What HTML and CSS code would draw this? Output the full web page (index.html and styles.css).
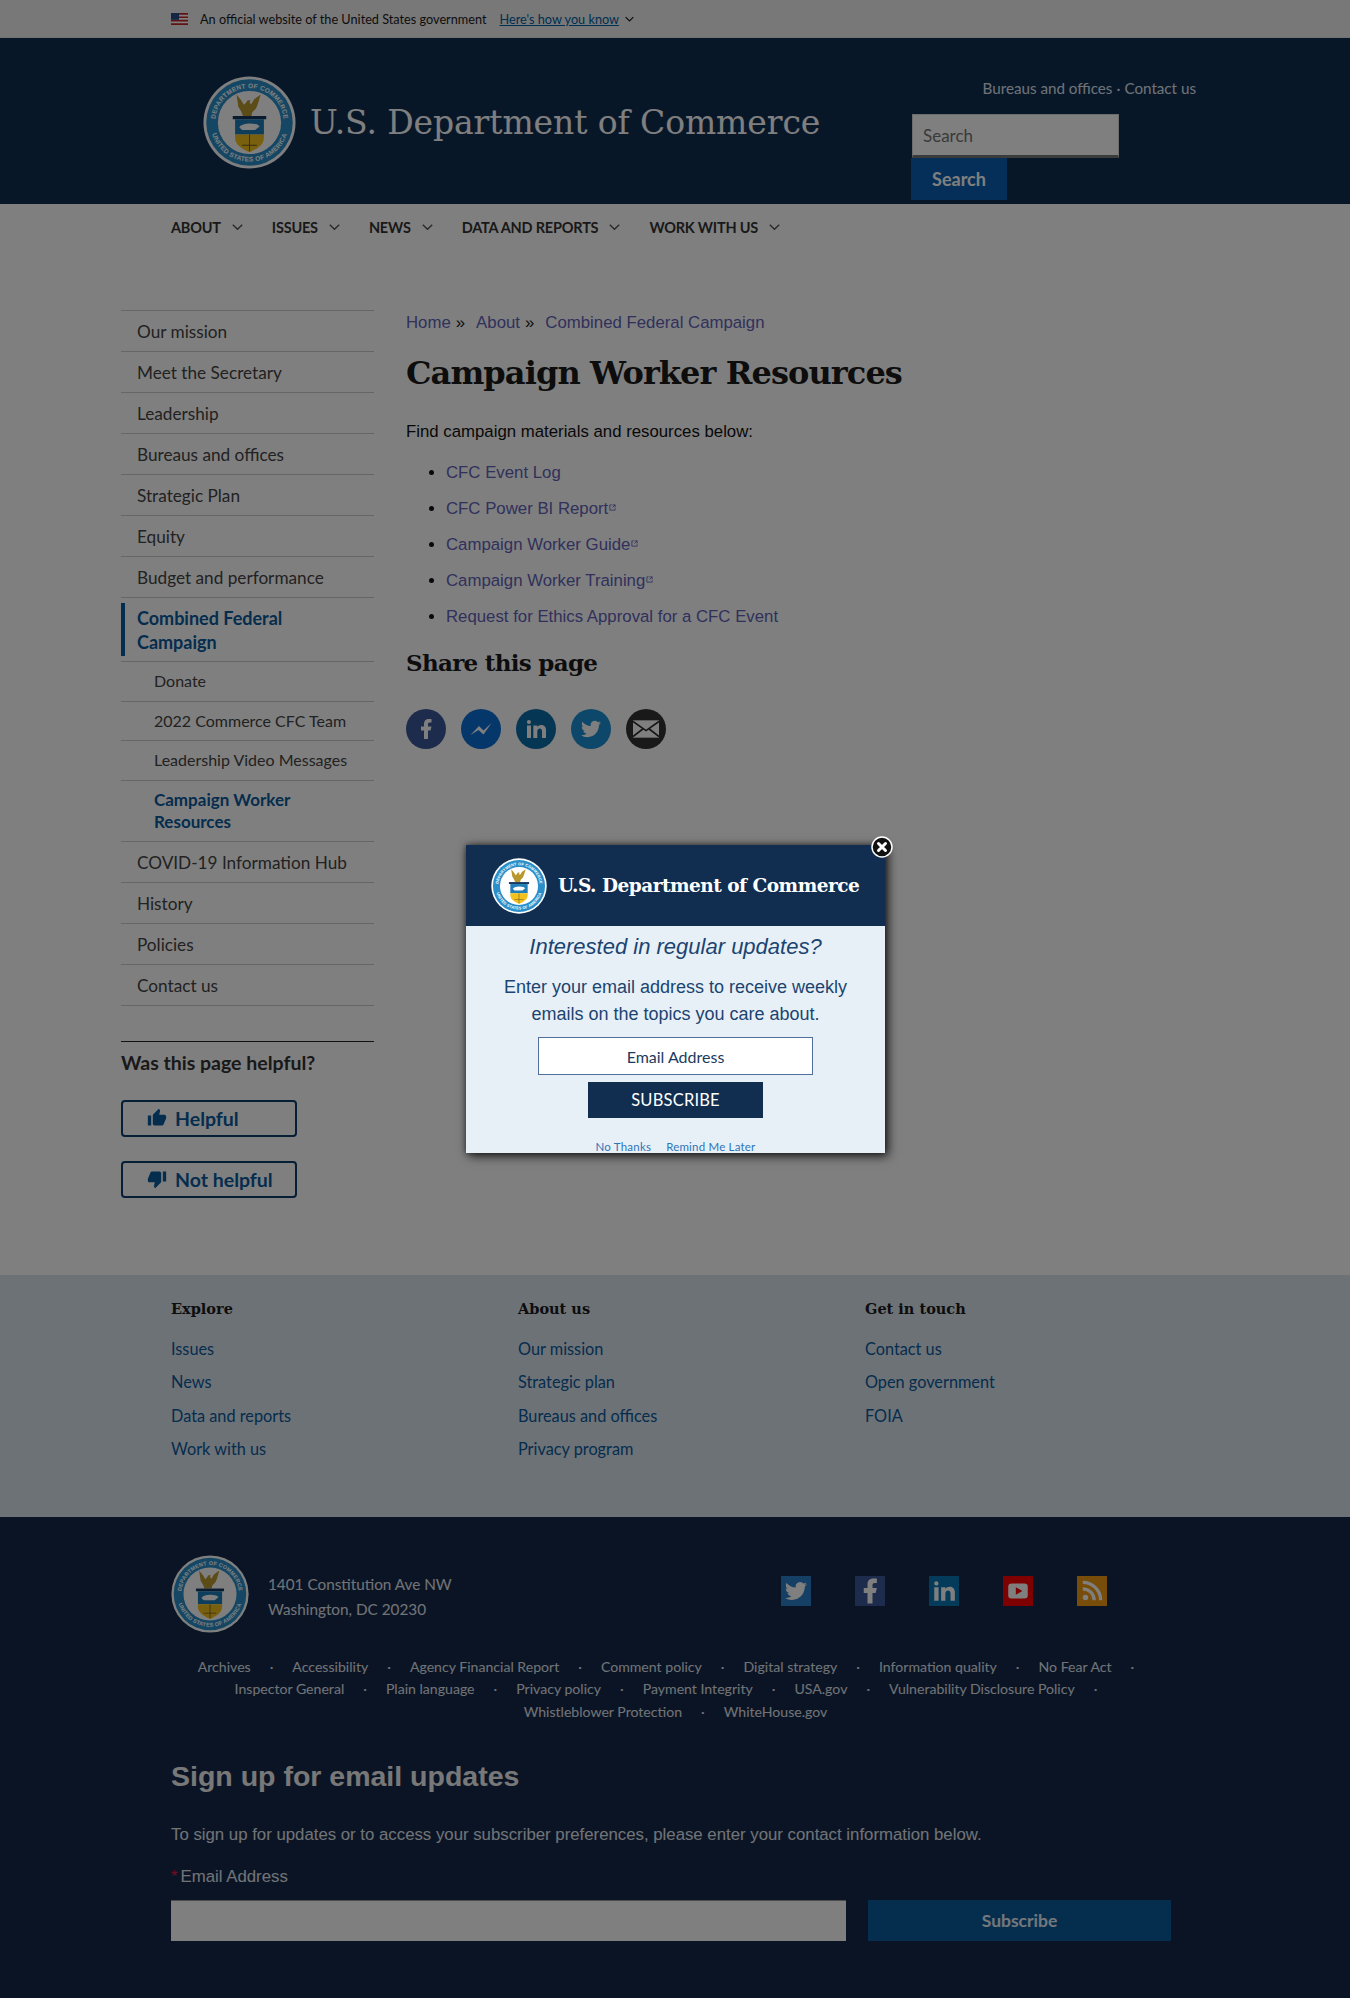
FILE: index.html
```html
<!DOCTYPE html>
<html lang="en">
<head>
<meta charset="utf-8">
<title>Campaign Worker Resources | U.S. Department of Commerce</title>
<link rel="stylesheet" href="styles.css">
</head>
<body>
<svg class="defs" width="0" height="0" aria-hidden="true">
  <defs>
    <symbol id="seal" viewBox="0 0 100 100">
      <circle cx="50" cy="50" r="49.5" fill="#fff"/>
      <circle cx="50" cy="50" r="46.5" fill="#2a8fc9"/>
      <circle cx="50" cy="50" r="34" fill="#fff"/>
      <path id="ringTop" d="M13 50a37 37 0 0 1 74 0" fill="none"/>
      <path id="ringBottom" d="M8 50a42 42 0 0 0 84 0" fill="none"/>
      <text class="seal-text"><textPath href="#ringTop" startOffset="50%" text-anchor="middle">DEPARTMENT OF COMMERCE</textPath></text>
      <text class="seal-text"><textPath href="#ringBottom" startOffset="50%" text-anchor="middle">UNITED STATES OF AMERICA</textPath></text>
      <path d="M36 20l5 6 3 5 2-2 2-3h3l-1 3 2 1 3-5 7-5-3 10-2 5-4 4-1 4h-9l-2-5-3-5z" fill="#b8982e"/>
      <rect x="32" y="43" width="36" height="3.500" fill="#16395f"/>
      <path d="M34.500 46.500h31V63h-31z" fill="#1f7db8"/>
      <path d="M39 55c3-4 11-5 19-3l3 2-5 4H42z" fill="#fff"/>
      <path d="M34.500 63h31v3c0 8-7 12-15.500 16-8.500-4-15.500-8-15.500-16z" fill="#f3c11c"/>
      <path d="M49.500 63h1v18h-1zM42 74h16v1H42z" fill="#6a5a20"/>
    </symbol>
    <symbol id="i-tw" viewBox="0 0 24 24"><path d="M23.950 4.570a10 10 0 0 1-2.830.78 4.960 4.960 0 0 0 2.160-2.720c-.95.550-2 .96-3.130 1.190a4.920 4.920 0 0 0-8.380 4.480C7.690 8.100 4.070 6.130 1.640 3.160a4.820 4.820 0 0 0-.66 2.470c0 1.710.87 3.210 2.190 4.100a4.900 4.900 0 0 1-2.230-.62v.06a4.920 4.920 0 0 0 3.950 4.830 5 5 0 0 1-2.210.08 4.940 4.940 0 0 0 4.600 3.420A9.870 9.870 0 0 1 0 19.540a14 14 0 0 0 7.560 2.210c9.050 0 14-7.500 14-13.980 0-.21 0-.42-.02-.63a9.940 9.940 0 0 0 2.460-2.550z"/></symbol>
    <symbol id="i-fb" viewBox="0 0 24 24"><path d="M14 13.500h2.500l1-4H14v-2c0-1.030 0-2 2-2h1.500V2.140c-.326-.043-1.557-.14-2.857-.14C11.928 2 10 3.657 10 6.700v2.800H7v4h3V22h4v-8.500z"/></symbol>
    <symbol id="i-in" viewBox="0 0 24 24"><path d="M6.940 5a2 2 0 1 1-4-.002 2 2 0 0 1 4 .002zM7 8.480H3V21h4V8.480zm6.320 0H9.340V21h3.940v-6.570c0-3.660 4.770-4 4.770 0V21H22v-7.930c0-6.170-7.060-5.940-8.720-2.910l.04-1.680z"/></symbol>
    <symbol id="i-up" viewBox="0 0 24 24"><path d="M1 21h4V9H1v12zm22-11c0-1.100-.9-2-2-2h-6.310l.95-4.570.03-.32c0-.41-.17-.79-.44-1.060L14.170 1 7.590 7.590C7.220 7.950 7 8.450 7 9v10c0 1.100.9 2 2 2h9c.83 0 1.540-.5 1.840-1.220l3.020-7.050c.09-.23.14-.47.14-.73v-2z"/></symbol>
    <symbol id="i-down" viewBox="0 0 24 24"><path d="M15 3H6c-.83 0-1.540.5-1.840 1.220l-3.020 7.050c-.09.23-.14.47-.14.73v2c0 1.100.9 2 2 2h6.310l-.95 4.570-.03.32c0 .41.17.79.44 1.060L9.830 23l6.590-6.590c.36-.36.58-.86.58-1.410V5c0-1.100-.9-2-2-2zm4 0v12h4V3h-4z"/></symbol>
    <symbol id="i-ext" viewBox="0 0 8 8"><path d="M3 1H1v6h6V5M4 1h3v3M7 1L4 4" fill="none" stroke="currentColor" stroke-width="1"/></symbol>
    <symbol id="i-chev" viewBox="0 0 14 9"><path d="M1 1.500l6 6 6-6" fill="none" stroke="currentColor" stroke-width="1.800"/></symbol>
  </defs>
</svg>

<div class="page">
  <div class="gov-banner">
    <svg class="flag" viewBox="0 0 17 12" width="17" height="12" aria-hidden="true">
      <rect width="17" height="12" fill="#fff"/>
      <path d="M0 0h17v1.700H0zM0 3.400h17v1.700H0zM0 6.800h17v1.700H0zM0 10.200h17V12H0z" fill="#c0262b"/>
      <rect width="8" height="6.800" fill="#2a4a8a"/>
    </svg>
    <span class="gov-text">An official website of the United States government</span>
    <a class="gov-link" href="#">Here's how you know</a>
    <svg class="gov-chev" width="9" height="6"><use href="#i-chev"/></svg>
  </div>

  <header class="site-header">
    <a class="brand" href="#">
      <svg class="brand-seal"><use href="#seal"/></svg>
      <span class="brand-name">U.S. Department of Commerce</span>
    </a>
    <div class="header-tools">
      <div class="top-links"><a href="#">Bureaus and offices</a><span class="sep">·</span><a href="#">Contact us</a></div>
      <div class="search-box"><input class="search-input" type="text" placeholder="Search"></div>
      <button class="search-btn" type="button">Search</button>
    </div>
  </header>

  <nav class="main-nav">
    <a href="#">About<svg class="nav-chev"><use href="#i-chev"/></svg></a>
    <a href="#">Issues<svg class="nav-chev"><use href="#i-chev"/></svg></a>
    <a href="#">News<svg class="nav-chev"><use href="#i-chev"/></svg></a>
    <a href="#">Data and reports<svg class="nav-chev"><use href="#i-chev"/></svg></a>
    <a href="#">Work with us<svg class="nav-chev"><use href="#i-chev"/></svg></a>
  </nav>

  <div class="content">
    <aside class="sidebar">
      <ul class="side-menu">
        <li><a href="#">Our mission</a></li>
        <li><a href="#">Meet the Secretary</a></li>
        <li><a href="#">Leadership</a></li>
        <li><a href="#">Bureaus and offices</a></li>
        <li><a href="#">Strategic Plan</a></li>
        <li><a href="#">Equity</a></li>
        <li><a href="#">Budget and performance</a></li>
        <li class="active"><a href="#">Combined Federal Campaign</a></li>
        <li class="sub"><a href="#">Donate</a></li>
        <li class="sub"><a href="#">2022 Commerce CFC Team</a></li>
        <li class="sub"><a href="#">Leadership Video Messages</a></li>
        <li class="sub current"><a href="#">Campaign Worker Resources</a></li>
        <li><a href="#">COVID-19 Information Hub</a></li>
        <li><a href="#">History</a></li>
        <li><a href="#">Policies</a></li>
        <li><a href="#">Contact us</a></li>
      </ul>
      <div class="helpful">
        <h2 class="helpful-title">Was this page helpful?</h2>
        <button class="helpful-btn" type="button"><svg class="thumb"><use href="#i-up"/></svg>Helpful</button>
        <button class="helpful-btn" type="button"><svg class="thumb"><use href="#i-down"/></svg>Not helpful</button>
      </div>
    </aside>

    <main class="main">
      <div class="crumbs"><a href="#">Home</a><span class="crumb-sep">»</span><a href="#">About</a><span class="crumb-sep">»</span><a href="#">Combined Federal Campaign</a></div>
      <h1 class="page-title">Campaign Worker Resources</h1>
      <p class="lead">Find campaign materials and resources below:</p>
      <ul class="res-list">
        <li><a href="#">CFC Event Log</a></li>
        <li><a href="#">CFC Power BI Report<svg class="ext"><use href="#i-ext"/></svg></a></li>
        <li><a href="#">Campaign Worker Guide<svg class="ext"><use href="#i-ext"/></svg></a></li>
        <li><a href="#">Campaign Worker Training<svg class="ext"><use href="#i-ext"/></svg></a></li>
        <li><a href="#">Request for Ethics Approval for a CFC Event</a></li>
      </ul>
      <h2 class="share-title">Share this page</h2>
      <div class="share">
        <a class="share-btn fb" href="#"><svg><use href="#i-fb"/></svg></a>
        <a class="share-btn ms" href="#"><svg viewBox="0 0 24 24"><path d="M1.500 18l8.500-9 4.500 4.500L22.500 6l-8 11.500-5-4.500z"/></svg></a>
        <a class="share-btn li" href="#"><svg><use href="#i-in"/></svg></a>
        <a class="share-btn tw" href="#"><svg><use href="#i-tw"/></svg></a>
        <a class="share-btn em" href="#"><svg viewBox="0 0 24 24"><path d="M0 4h24v16H0z"/><path d="M0 5l12 8.500L24 5M0 19l9-7M24 19l-9-7" fill="none" stroke="#2a2a2a" stroke-width="1.500"/></svg></a>
      </div>
    </main>
  </div>

  <section class="foot-links">
    <div class="foot-col">
      <h3>Explore</h3>
      <a href="#">Issues</a><a href="#">News</a><a href="#">Data and reports</a><a href="#">Work with us</a>
    </div>
    <div class="foot-col">
      <h3>About us</h3>
      <a href="#">Our mission</a><a href="#">Strategic plan</a><a href="#">Bureaus and offices</a><a href="#">Privacy program</a>
    </div>
    <div class="foot-col">
      <h3>Get in touch</h3>
      <a href="#">Contact us</a><a href="#">Open government</a><a href="#">FOIA</a>
    </div>
  </section>

  <footer class="site-footer">
    <div class="foot-top">
      <svg class="foot-seal"><use href="#seal"/></svg>
      <address class="foot-address">1401 Constitution Ave NW<br>Washington, DC 20230</address>
      <div class="socials">
        <a class="soc s-tw" href="#"><svg><use href="#i-tw"/></svg></a>
        <a class="soc s-fb" href="#"><svg><use href="#i-fb"/></svg></a>
        <a class="soc s-li" href="#"><svg><use href="#i-in"/></svg></a>
        <a class="soc s-yt" href="#"><svg viewBox="0 0 24 24"><rect x="3" y="5" width="18" height="14" rx="3"/><path class="yt-play" d="M10 8.500l6 3.500-6 3.500z"/></svg></a>
        <a class="soc s-rs" href="#"><svg viewBox="0 0 24 24"><circle cx="6" cy="18" r="2.500"/><path d="M3.500 10a10.500 10.500 0 0 1 10.500 10.500M3.500 4a16.500 16.500 0 0 1 16.500 16.500" fill="none" stroke="currentColor" stroke-width="3"/></svg></a>
      </div>
    </div>
    <ul class="legal">
      <li><a href="#">Archives</a></li><li><a href="#">Accessibility</a></li><li><a href="#">Agency Financial Report</a></li><li><a href="#">Comment policy</a></li><li><a href="#">Digital strategy</a></li><li><a href="#">Information quality</a></li><li><a href="#">No Fear Act</a></li>
    </ul>
    <ul class="legal">
      <li><a href="#">Inspector General</a></li><li><a href="#">Plain language</a></li><li><a href="#">Privacy policy</a></li><li><a href="#">Payment Integrity</a></li><li><a href="#">USA.gov</a></li><li><a href="#">Vulnerability Disclosure Policy</a></li>
    </ul>
    <ul class="legal last">
      <li><a href="#">Whistleblower Protection</a></li><li><a href="#">WhiteHouse.gov</a></li>
    </ul>
    <h2 class="signup-title">Sign up for email updates</h2>
    <p class="signup-text">To sign up for updates or to access your subscriber preferences, please enter your contact information below.</p>
    <label class="signup-label"><span class="req">*</span>Email Address</label>
    <div class="signup-row">
      <input class="signup-input" type="text">
      <button class="signup-btn" type="button">Subscribe</button>
    </div>
  </footer>

  <div class="overlay"></div>

  <div class="modal">
    <button class="modal-close" type="button" aria-label="Close">
      <svg viewBox="0 0 22 22" width="22" height="22"><circle cx="11" cy="11" r="10" fill="#111" stroke="#fff" stroke-width="1.500"/><path d="M7.500 7.500l7 7M14.500 7.500l-7 7" stroke="#fff" stroke-width="3" stroke-linecap="round"/></svg>
    </button>
    <div class="modal-head">
      <svg class="modal-seal"><use href="#seal"/></svg>
      <span class="modal-name">U.S. Department of Commerce</span>
    </div>
    <div class="modal-body">
      <p class="modal-q">Interested in regular updates?</p>
      <p class="modal-text">Enter your email address to receive weekly<br>emails on the topics you care about.</p>
      <input class="modal-input" type="text" placeholder="Email Address">
      <button class="modal-btn" type="button">SUBSCRIBE</button>
      <div class="modal-links"><a href="#">No Thanks</a><a href="#">Remind Me Later</a></div>
    </div>
  </div>
</div>
</body>
</html>
```
FILE: styles.css
```css
* { box-sizing: border-box; }
html, body { margin: 0; padding: 0; }
body { font-family: "Lato", "Noto Sans", sans-serif; color: #1b1b1b; background: #fff; }
a { color: inherit; text-decoration: none; }
ul { margin: 0; padding: 0; list-style: none; }
.defs { position: absolute; }
.seal-text { font: 700 7px "Liberation Sans", sans-serif; fill: #fff; letter-spacing: .25px; }

.page { position: relative; width: 1350px; height: 1998px; overflow: hidden; }

/* gov banner */
.gov-banner { height: 38px; background: #f0f0f0; display: flex; align-items: center; padding-left: 171px; font-size: 12.700px; border-bottom: 1px solid #e4e4e4; }
.flag { margin-right: 12px; }
.gov-text { margin-right: 13px; }
.gov-link { color: #005ea2; text-decoration: underline; }
.gov-chev { margin-left: 6px; color: #1b1b1b; }

/* header */
.site-header { height: 166px; background: #112e51; display: flex; color: #fff; }
.brand { display: flex; align-items: center; padding: 3px 0 0 203px; width: 911px; height: 166px; }
.brand-seal { width: 93px; height: 93px; margin-right: 14px; }
.brand-name { font: 400 33px "DejaVu Serif", serif; letter-spacing: -.1px; white-space: nowrap; }
.header-tools { display: flex; flex-direction: column; align-items: flex-start; width: 300px; }
.top-links { width: 285px; text-align: right; margin-top: 40px; font-size: 15.200px; line-height: 20px; color: #dfe6f0; }
.top-links .sep { margin: 0 4px; }
.search-box { margin-top: 16px; margin-left: 1px; }
.search-input { display: block; width: 207px; height: 44px; border: 1px solid #d8d8d8; border-bottom: 3px solid #777; background: #fff; padding: 0 10px; font: 17px "Lato", sans-serif; color: #333; }
.search-input::placeholder { color: #757575; }
.search-btn { width: 96px; height: 42px; border: 0; background: #0a5fb0; color: #fff; font: 700 18px "Lato", sans-serif; }

/* nav */
.main-nav { height: 46px; background: #fff; padding-left: 171px; display: flex; align-items: center; font-weight: 700; font-size: 14.500px; letter-spacing: -.2px; text-transform: uppercase; color: #333; }
.main-nav a { display: flex; align-items: center; margin-right: 29px; white-space: nowrap; }
.nav-chev { width: 11px; height: 8px; margin-left: 11px; color: #555; }

/* content */
.content { height: 1025px; display: flex; padding: 60px 0 0 121px; }
.sidebar { width: 253px; flex: none; }
.side-menu { border-top: 1px solid #ccc; }
.side-menu li { border-bottom: 1px solid #ccc; font-size: 17.200px; color: #444; }
.side-menu li a { display: block; padding: 10px 8px 8px 16px; line-height: 22px; }
.side-menu .active { padding: 5px 0 5px; font-size: 18px; }
.side-menu .active a { border-left: 4px solid #0a5a9c; padding: 3px 30px 2px 12px; line-height: 24px; color: #0a5a9c; font-weight: 700; }
.side-menu .sub { font-size: 16px; }
.side-menu .sub a { padding: 9px 8px 9px 33px; line-height: 20.500px; }
.side-menu .current { font-size: 17px; }
.side-menu .current a { color: #0a5a9c; font-weight: 700; padding: 8px 40px 8px 33px; line-height: 22px; }

.helpful { margin-top: 35px; border-top: 1px solid #222; }
.helpful-title { margin: 9px 0 25px; font-size: 19.500px; line-height: 24px; font-weight: 700; color: #333; }
.helpful-btn { display: flex; align-items: center; width: 176px; height: 37px; margin-bottom: 24px; padding: 0 0 0 24px; background: transparent; border: 2px solid #0c3c6c; border-radius: 4px; color: #0a5a9c; font: 700 19.500px "Lato", sans-serif; }
.thumb { width: 20px; height: 20px; margin-right: 8px; fill: currentColor; }

.main { margin-left: 32px; width: 800px; }
.crumbs { margin-top: 1px; font: 16.800px/24px "Liberation Sans", sans-serif; color: #1b1b1b; }
.crumbs a { color: #6262b8; }
.crumb-sep { margin: 0 11px 0 5px; }
.page-title { margin: 16px 0 0; font: 700 32px/44px "DejaVu Serif", serif; letter-spacing: -.9px; color: #1b1b1b; white-space: nowrap; }
.lead { margin: 25px 0 0; font: 16.800px/24px "Liberation Sans", sans-serif; color: #111; }
.res-list { margin: 17px 0 0; padding-left: 40px; list-style: disc; font: 16.800px/24px "Liberation Sans", sans-serif; }
.res-list li { height: 36px; color: #111; }
.res-list a { color: #6262b8; }
.ext { width: 7px; height: 7px; vertical-align: 3px; margin-left: 1px; color: #6262b8; }
.share-title { margin: 5px 0 0; font: 700 23px/34px "DejaVu Serif", serif; letter-spacing: -.7px; color: #1b1b1b; }
.share { display: flex; gap: 15px; margin-top: 29px; }
.share-btn { display: flex; align-items: center; justify-content: center; width: 40px; height: 40px; border-radius: 50%; color: #fff; }
.share-btn svg { width: 24px; height: 24px; fill: #fff; }
.share-btn.fb { background: #3b5998; }
.share-btn.ms { background: #0a6fd6; }
.share-btn.li { background: #0a6ea8; }
.share-btn.tw { background: #1a91d6; }
.share-btn.tw svg { width: 20px; height: 20px; }
.share-btn.em { background: #333; }
.share-btn.em svg { width: 26px; height: 26px; }

/* footer links */
.foot-links { height: 242px; background: #dbe4ee; display: flex; padding: 22px 0 0 171px; }
.foot-col { width: 347px; display: flex; flex-direction: column; align-items: flex-start; }
.foot-col h3 { margin: 0 0 11px; font: 700 14.500px/24px "DejaVu Serif", serif; color: #1b1b1b; }
.foot-col a { font-size: 16.300px; line-height: 33.400px; color: #0a5a9c; }

/* site footer */
.site-footer { height: 481px; background: #14294a; padding: 38px 170px 0 171px; color: #e3e7ee; }
.foot-top { display: flex; align-items: center; height: 78px; }
.foot-seal { width: 78px; height: 78px; margin-right: 19px; flex: none; }
.foot-address { font-style: normal; font-size: 15.300px; line-height: 25px; flex: none; width: 513px; margin-top: 5px; }
.socials { display: flex; gap: 44px; margin-top: -6px; }
.soc { display: flex; align-items: center; justify-content: center; width: 30px; height: 30px; fill: #fff; color: #fff; }
.soc svg { width: 26px; height: 26px; fill: #fff; }
.s-tw svg { width: 22px; height: 22px; }
.s-fb svg { width: 30px; height: 30px; }
.s-tw { background: #2a7fc8; }
.s-fb { background: #3b5998; }
.s-li { background: #0a76b4; }
.s-yt { background: #f00; }
.s-rs { background: #f09a12; }
.yt-play { fill: #f00; }
.legal { display: flex; justify-content: center; font-size: 14.100px; line-height: 22.300px; white-space: nowrap; }
.legal:first-of-type { margin-top: 23px; }
.legal li { padding-right: 19px; }
.legal li::after { content: "·"; margin-left: 19px; }
.legal.last li:last-child::after { content: none; }
.legal.last li:last-child { padding-right: 0; }
.signup-title { margin: 35px 0 0; font: 700 28.500px/36px "Liberation Sans", sans-serif; color: #f0f0f0; }
.signup-text { margin: 29px 0 0; font: 16.800px/24px "Liberation Sans", sans-serif; }
.signup-label { display: block; margin-top: 18px; font: 16.800px/24px "Liberation Sans", sans-serif; }
.req { color: #e31c3d; margin-right: 3px; }
.signup-row { display: flex; gap: 22px; margin-top: 11px; }
.signup-input { width: 675px; height: 41px; border: 0; border-top: 1px solid #999; background: #fff; }
.signup-btn { width: 303px; height: 41px; border: 0; background: #0a5a9c; color: #e8eef6; font: 700 17.500px "Lato", sans-serif; }

/* overlay + modal */
.overlay { position: absolute; inset: 0; background: rgba(0,0,0,.5); }
.modal { position: absolute; left: 466px; top: 845px; width: 419px; height: 308px; box-shadow: 3px 3px 10px rgba(0,0,0,.75), 0 0 6px rgba(0,0,0,.5); background: #e8f0f7; }
.modal-close { position: absolute; left: 405px; top: -9px; width: 22px; height: 22px; padding: 0; border: 0; background: none; display: block; }
.modal-head { height: 81px; background: #112e51; display: flex; align-items: center; padding-left: 25px; }
.modal-seal { width: 56px; height: 56px; margin-right: 11px; }
.modal-name { font: 700 18.500px "DejaVu Serif", serif; color: #fff; letter-spacing: -.5px; white-space: nowrap; }
.modal-body { height: 227px; overflow: hidden; text-align: center; color: #1b4470; font-family: "Liberation Sans", sans-serif; }
.modal-q { margin: 7px 0 0; font-style: italic; font-size: 22px; line-height: 28px; }
.modal-text { margin: 13px 0 0; font-size: 18px; line-height: 26.600px; }
.modal-input { display: block; width: 275px; height: 38px; margin: 10px auto 0 72px; border: 1px solid #4f709c; background: #fff; text-align: center; font: 16px "Lato", sans-serif; }
.modal-input::placeholder { color: #1b3a60; opacity: 1; }
.modal-btn { display: block; width: 175px; height: 36px; margin: 7px 0 0 122px; border: 0; background: #112e51; color: #fff; font: 16.500px "Lato", sans-serif; letter-spacing: .2px; }
.modal-links { display: flex; justify-content: center; gap: 15px; margin: 23px 0 0; font: 11.500px/12px "Lato", sans-serif; color: #2d74b8; letter-spacing: .2px; }
```
